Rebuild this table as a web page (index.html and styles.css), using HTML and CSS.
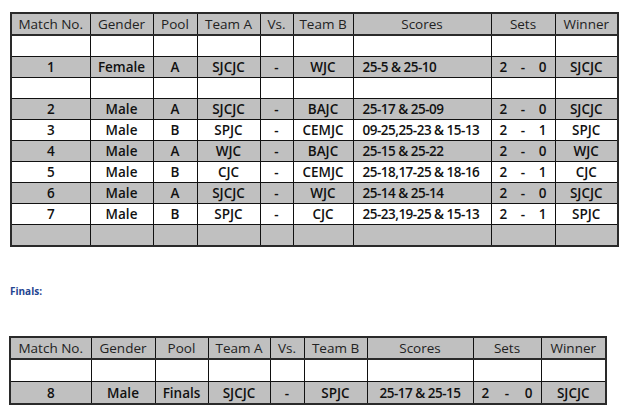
FILE: index.html
```html
<!DOCTYPE html>
<html>
<head>
<meta charset="utf-8">
<link rel="stylesheet" href="styles.css">
</head>
<body>
<div class="page">
<table class="grid pool">
  <colgroup>
    <col style="width:79px"><col style="width:63px"><col style="width:44px"><col style="width:63px"><col style="width:33px"><col style="width:60px"><col style="width:138px"><col style="width:64px"><col style="width:63px">
  </colgroup>
  <tr class="head"><td>Match No.</td><td>Gender</td><td>Pool</td><td>Team A</td><td>Vs.</td><td>Team B</td><td>Scores</td><td>Sets</td><td>Winner</td></tr>
  <tr class="w"><td></td><td></td><td></td><td></td><td></td><td></td><td></td><td></td><td></td></tr>
  <tr class="g"><td>1</td><td>Female</td><td>A</td><td>SJCJC</td><td>-</td><td>WJC</td><td class="sc">25-5 &amp; 25-10</td><td class="sets"><div class="sv"><span>2</span><span>-</span><span>0</span></div></td><td>SJCJC</td></tr>
  <tr class="w"><td></td><td></td><td></td><td></td><td></td><td></td><td></td><td></td><td></td></tr>
  <tr class="g"><td>2</td><td>Male</td><td>A</td><td>SJCJC</td><td>-</td><td>BAJC</td><td class="sc">25-17 &amp; 25-09</td><td class="sets"><div class="sv"><span>2</span><span>-</span><span>0</span></div></td><td>SJCJC</td></tr>
  <tr class="w"><td>3</td><td>Male</td><td>B</td><td>SPJC</td><td>-</td><td>CEMJC</td><td class="sc">09-25,25-23 &amp; 15-13</td><td class="sets"><div class="sv"><span>2</span><span>-</span><span>1</span></div></td><td>SPJC</td></tr>
  <tr class="g"><td>4</td><td>Male</td><td>A</td><td>WJC</td><td>-</td><td>BAJC</td><td class="sc">25-15 &amp; 25-22</td><td class="sets"><div class="sv"><span>2</span><span>-</span><span>0</span></div></td><td>WJC</td></tr>
  <tr class="w"><td>5</td><td>Male</td><td>B</td><td>CJC</td><td>-</td><td>CEMJC</td><td class="sc">25-18,17-25 &amp; 18-16</td><td class="sets"><div class="sv"><span>2</span><span>-</span><span>1</span></div></td><td>CJC</td></tr>
  <tr class="g"><td>6</td><td>Male</td><td>A</td><td>SJCJC</td><td>-</td><td>WJC</td><td class="sc">25-14 &amp; 25-14</td><td class="sets"><div class="sv"><span>2</span><span>-</span><span>0</span></div></td><td>SJCJC</td></tr>
  <tr class="w"><td>7</td><td>Male</td><td>B</td><td>SPJC</td><td>-</td><td>CJC</td><td class="sc">25-23,19-25 &amp; 15-13</td><td class="sets"><div class="sv"><span>2</span><span>-</span><span>1</span></div></td><td>SPJC</td></tr>
  <tr class="g"><td></td><td></td><td></td><td></td><td></td><td></td><td></td><td></td><td></td></tr>
</table>

<p class="finals">Finals:</p>

<table class="grid final">
  <colgroup>
    <col style="width:81px"><col style="width:64px"><col style="width:53px"><col style="width:62px"><col style="width:34px"><col style="width:63px"><col style="width:106px"><col style="width:68px"><col style="width:65px">
  </colgroup>
  <tr class="head"><td>Match No.</td><td>Gender</td><td>Pool</td><td>Team A</td><td>Vs.</td><td>Team B</td><td>Scores</td><td>Sets</td><td>Winner</td></tr>
  <tr class="w"><td></td><td></td><td></td><td></td><td></td><td></td><td></td><td></td><td></td></tr>
  <tr class="g"><td>8</td><td>Male</td><td>Finals</td><td>SJCJC</td><td>-</td><td>SPJC</td><td class="sc c">25-17 &amp; 25-15</td><td class="sets"><div class="sv"><span>2</span><span>-</span><span>0</span></div></td><td>SJCJC</td></tr>
</table>
</div>
</body>
</html>
```
FILE: styles.css
```css
html, body {
  margin: 0;
  padding: 0;
  background: #fff;
}
.page {
  padding: 12px 0 0 10px;
  font-family: "Open Sans", "Noto Sans", sans-serif;
  color: #111;
}
.grid {
  border-collapse: collapse;
  table-layout: fixed;
  border: 2px solid #2a2a2a;
  font-size: 13.5px;
}
.pool {
  width: 608px;
}
.final {
  width: 597px;
}
.grid td {
  border: 1px solid #111;
  text-align: center;
  padding: 0;
  white-space: nowrap;
  overflow: hidden;
  height: 20px;
  line-height: 18px;
}
.grid .head td {
  border-bottom: 2px solid #2a2a2a;
  height: 20px;
  color: #222;
}
.grid tr.g td,
.grid tr.head td {
  background: #c0c0c0;
}
.grid tr.w td {
  background: #fff;
}
.grid tr.g td, .grid tr.w td {
  font-weight: 600;
}
.grid td.sc {
  text-align: left;
  padding-left: 9px;
  letter-spacing: -0.5px;
}
.grid td.sc.c {
  text-align: center;
  padding-left: 0;
}
.grid td.sets {
  padding: 0 8px;
}
.sv {
  display: flex;
  justify-content: space-between;
}
.finals {
  margin: 38px 0 0 0;
  font-size: 10px;
  font-weight: 700;
  color: #1f4591;
  line-height: 12px;
}
.final {
  margin: 39px 0 0 -1px;
}
.final td {
  height: 21px;
}
.final .head td {
  height: 20px;
}
```
